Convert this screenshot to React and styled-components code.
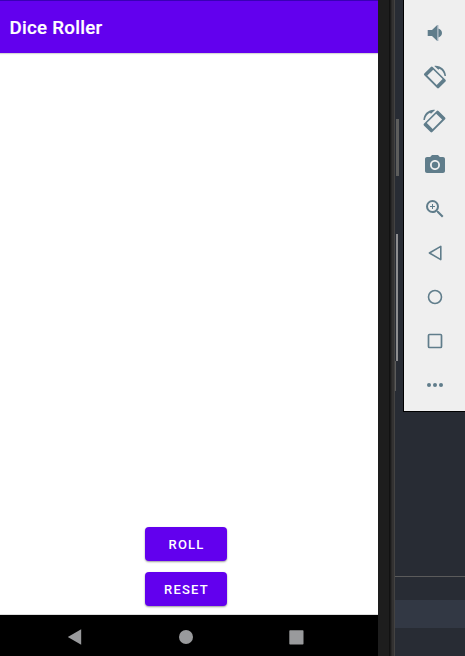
import React from 'react';
import styled, { createGlobalStyle } from 'styled-components';
import { MdCameraAlt, MdZoomIn } from 'react-icons/md';

const GlobalStyle = createGlobalStyle`
  * { box-sizing: border-box; }
  body { margin: 0; overflow: hidden; font-family: Roboto, sans-serif; }
`;

const Desktop = styled.main`
  position: relative;
  display: flex;
  width: 465px;
  height: 656px;
  overflow: hidden;
  background: #282c34;
`;

const Screen = styled.section`
  display: flex;
  flex-direction: column;
  flex: 0 0 378px;
  background: #fff;
`;

const AppBar = styled.header`
  flex: 0 0 53px;
  display: flex;
  align-items: center;
  padding: 2px 0 0 9.5px;
  border-top: 1px solid #3a00b5;
  background: #6200ee;
  box-shadow: 0 1px 1px rgba(0, 0, 0, 0.16);
`;

const Title = styled.h1`
  margin: 0;
  color: #fff;
  font-size: 18.7px;
  line-height: 24px;
  font-weight: 500;
  letter-spacing: 0.28px;
  -webkit-text-stroke: 0.2px #fff;
`;

const Content = styled.div`
  flex: 1;
  display: flex;
  flex-direction: column;
  align-items: center;
  justify-content: flex-end;
  gap: 11px;
  padding: 0 6px 8px 0;
  border-bottom: 1px solid #ddd;
`;

const Button = styled.button`
  width: 82px;
  height: 34px;
  padding: 1px 0 0 1px;
  border: 0;
  border-radius: 4px;
  background: #6200ee;
  color: #fff;
  font: 500 13px/16px Roboto, sans-serif;
  letter-spacing: 1.2px;
  box-shadow: 0 1px 2px rgba(0, 0, 0, 0.4);
`;

const NavBar = styled.nav`
  flex: 0 0 41px;
  display: flex;
  align-items: center;
  justify-content: space-between;
  padding: 3px 74px 0 67px;
  background: #000;
  color: #999a9c;

  svg { display: block; }
`;

const Bezel = styled.div`
  flex: 0 0 17px;
  background: linear-gradient(90deg,
    #1d1d1d 0 11px, #111 11px 12px, #1b1b1b 12px 13px,
    #292828 13px 14px, #333232 14px 16px, #444342 16px 17px);
`;

const Backdrop = styled.div`
  flex: 1;
  display: flex;
  flex-direction: column;
  align-items: flex-end;
  min-width: 0;
`;

const ToolPanel = styled.aside`
  flex: 0 0 412px;
  width: 62px;
  display: flex;
  flex-direction: column;
  align-items: center;
  padding-top: 11px;
  border-left: 1px solid #000;
  border-bottom: 1px solid #000;
  background: #efefef;
`;

const ToolButton = styled.button`
  display: grid;
  place-items: center;
  flex: 0 0 44px;
  width: 44px;
  padding: 0;
  border: 0;
  background: none;
  color: #607d8b;

  svg { display: block; }
`;

const Editor = styled.div`
  flex: 1;
  align-self: stretch;
  display: flex;
  flex-direction: column;
  padding-top: 164px;
`;

const EditorLine = styled.div`
  height: 24px;
  border-top: 1px solid #5b5b5b;
`;

const ActiveLine = styled.div`
  height: 28px;
  background: #323844;
`;

const SideKey = styled.i`
  position: absolute;
  left: ${(p) => p.$left}px;
  top: ${(p) => p.$top}px;
  width: ${(p) => p.$width}px;
  height: ${(p) => p.$height}px;
  background: ${(p) => p.$color};
`;

const Icon = ({ children, size = 24 }) => (
  <svg width={size} height={size} viewBox={`0 0 ${size} ${size}`} fill="none" stroke="currentColor">
    {children}
  </svg>
);

const RotateIcon = ({ mirrored }) => (
  <Icon>
    <g transform={mirrored ? 'translate(23.4 0) scale(-1 1)' : undefined}>
      <path
        fill="currentColor"
        stroke="none"
        fillRule="evenodd"
        d="M8.1 2.1Q9 1.2 9.9 2.1L22.7 14.9Q23.5 15.8 22.7 16.7L16.1 23.2Q15.2 24 14.3 23.2L1.5 10.4Q.7 9.5 1.5 8.6ZM10.4 4.9L4.5 10.8L13.9 20.2L19.8 14.3Z"
        transform="translate(-.2 -.2)"
      />
      <path
        fill="currentColor"
        stroke="none"
        d="M11.3.9C17.5.2 22.6 4.6 23 11H21.5C21.1 7.8 19.3 5 16.4 3.7L15.4 4.8Z"
      />
    </g>
  </Icon>
);

const VolumeIcon = () => (
  <Icon>
    <path fill="#b3bfca" stroke="none" d="M14 4H15.5V20H14Z" />
    <path fill="currentColor" stroke="none" d="M4.7 9V15H9L14.2 20V4L9 9ZM15.4 7.6V16.4C17.6 15.6 19 14 19 12S17.6 8.4 15.4 7.6Z" />
  </Icon>
);

const TOOLS = [
  ['Volume', <VolumeIcon />],
  ['Rotate left', <RotateIcon />],
  ['Rotate right', <RotateIcon mirrored />],
  ['Take screenshot', <MdCameraAlt size={24} />],
  ['Zoom', <MdZoomIn size={24} />],
  ['Back', <Icon><path d="M17.8 5.4V18.6L6.4 12Z" strokeWidth="1.6" strokeLinejoin="round" /></Icon>],
  ['Home', <Icon><circle cx="12" cy="12" r="6.5" strokeWidth="1.6" /></Icon>],
  ['Overview', <Icon><rect x="5.5" y="5.5" width="13" height="13" rx="1" strokeWidth="1.7" /></Icon>],
  ['More', <Icon><g fill="currentColor" stroke="none"><circle cx="6" cy="12" r="2" /><circle cx="12" cy="12" r="2" /><circle cx="18" cy="12" r="2" /></g></Icon>],
];

export default function App() {
  return (
    <>
      <GlobalStyle />
      <Desktop>
        <Screen>
          <AppBar><Title>Dice Roller</Title></AppBar>
          <Content>
            <Button>ROLL</Button>
            <Button>RESET</Button>
          </Content>
          <NavBar>
            <svg width="16" height="18" viewBox="0 0 16 18"><path d="M14.2 1.2V16.8L.8 9Z" fill="currentColor" /></svg>
            <svg width="16" height="16" viewBox="0 0 16 16"><circle cx="8" cy="8" r="7" fill="currentColor" /></svg>
            <svg width="15" height="15" viewBox="0 0 15 15"><rect x=".3" y=".3" width="14.2" height="14.2" rx=".8" fill="currentColor" /></svg>
          </NavBar>
        </Screen>
        <Bezel />
        <Backdrop>
          <ToolPanel>
            {TOOLS.map(([label, icon]) => (
              <ToolButton key={label} aria-label={label}>{icon}</ToolButton>
            ))}
          </ToolPanel>
          <Editor>
            <EditorLine />
            <ActiveLine />
          </Editor>
        </Backdrop>
        <SideKey $left={396} $top={119} $width={3} $height={57} $color="#5d5d5c" />
        <SideKey $left={396} $top={234} $width={2} $height={127} $color="#8d8d8f" />
        <SideKey $left={395} $top={361} $width={1} $height={30} $color="#5b5b5b" />
      </Desktop>
    </>
  );
}
